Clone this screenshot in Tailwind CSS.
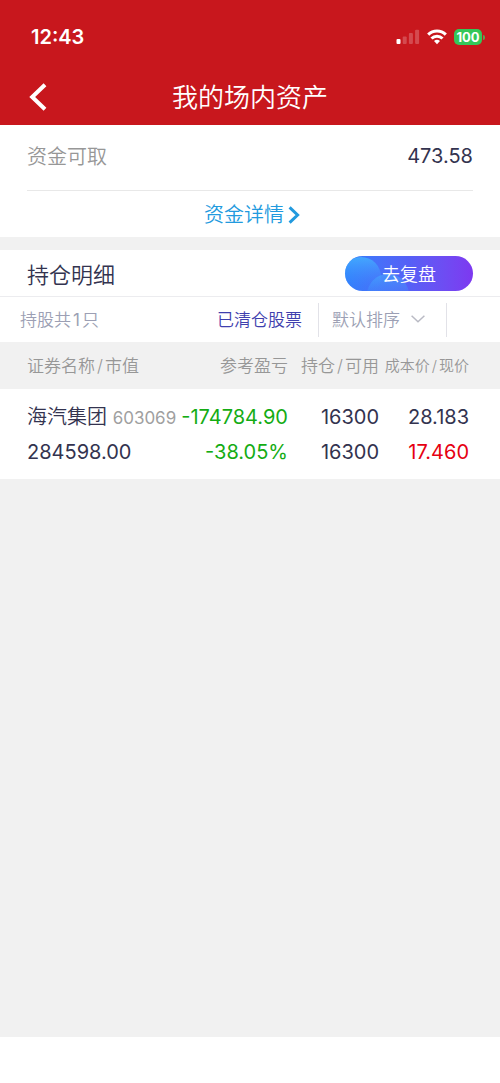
<!doctype html>
<html lang="zh-CN">

<head>
    <meta charset="UTF-8" />
    <meta name="viewport" content="width=device-width, initial-scale=1.0" />
    <title>我的场内资产</title>
    <script src="https://cdn.jsdelivr.net/npm/@tailwindcss/browser@4"></script>
</head>

<body class="flex min-h-screen flex-col bg-white font-['Inter','Noto_Sans_CJK_SC',sans-serif] font-[350] text-[#33334f]">
    <header class="bg-[#c8171d] text-white">
        <!-- status bar -->
        <div class="flex h-[68px] items-center justify-between pt-1.5 pr-[15px] pl-[31px]">
            <span class="text-[20px] leading-6 font-semibold">12:43</span>
            <div class="flex items-center gap-[7px]">
                <svg class="h-4 w-6" viewBox="0 0 24 16" fill="#fff" aria-hidden="true">
                    <rect x="0.5" y="10" width="4" height="5" rx="1" />
                    <g opacity=".22">
                        <rect x="6.7" y="7.5" width="4" height="7.5" rx="1" />
                        <rect x="12.9" y="4" width="4" height="11" rx="1" />
                        <rect x="19.1" y="0.8" width="4" height="14.2" rx="1" />
                    </g>
                </svg>
                <svg class="h-4 w-5" viewBox="0 0 20 16" fill="none" stroke="#fff" stroke-width="3.1" aria-hidden="true">
                    <path d="M1.2 5.6a12.6 12.6 0 0 1 17.6 0" />
                    <path d="M4.5 9.5a7.8 7.8 0 0 1 11 0" />
                    <path d="M10 15.2l-3-3.1a4.4 4.4 0 0 1 6 0z" fill="#fff" stroke="none" />
                </svg>
                <div class="flex items-center gap-px">
                    <span class="flex h-4 w-7 items-center justify-center rounded-[5px] bg-[#34c759] text-[13px] leading-4 font-bold">100</span>
                    <span class="h-[5px] w-0.5 rounded-r-full bg-[#5fa050]"></span>
                </div>
            </div>
        </div>

        <!-- title bar -->
        <div class="grid h-[57px] grid-cols-[1fr_auto_1fr] items-center">
            <button type="button" aria-label="返回" class="ml-[29px] flex size-8 items-center">
                <svg class="h-7 w-[18px]" viewBox="0 0 18 28" fill="none" stroke="#fff" stroke-width="4">
                    <path d="M16 1.8L3.2 14L16 26.2" />
                </svg>
            </button>
            <h1 class="pt-0.5 text-[26px] leading-8">我的场内资产</h1>
        </div>
    </header>

    <main class="flex-1 bg-[#f1f1f1]">
        <!-- available funds -->
        <section class="bg-white px-[27px]">
            <div class="flex h-[66px] items-center justify-between border-b border-[#e8e8e8] pb-1 text-[20px] leading-7">
                <span class="pt-0.5 text-[#979797]">资金可取</span>
                <span class="font-normal">473.58</span>
            </div>
            <a href="#" class="flex h-[46px] items-center justify-center gap-1 pt-0.5 pl-1 text-[20px] leading-7 text-[#229ade]">
                资金详情
                <svg class="h-[18px] w-3" viewBox="0 0 12 18" fill="none" stroke="currentColor" stroke-width="3">
                    <path d="M1.6 1.4L9.6 9L1.6 16.6" />
                </svg>
            </a>
        </section>

        <!-- holdings -->
        <section class="mt-[13px] bg-white">
            <div class="flex h-[47px] items-center justify-between border-b border-[#ececef] px-[27px]">
                <h2 class="pt-1 text-[22px] leading-8">持仓明细</h2>
                <button type="button" class="relative h-[35px] w-32 overflow-hidden rounded-full bg-linear-to-r from-[#2f80fc] via-[#5560f6] to-[#7d38f0] pt-1 text-[18px] leading-6 text-white">
                    <svg class="absolute inset-0 h-full w-full" viewBox="0 0 128 35" aria-hidden="true">
                        <defs>
                            <linearGradient id="bubble" x1="0" y1="0" x2="0" y2="1">
                                <stop offset="0" stop-color="#45b4ff" stop-opacity=".8" />
                                <stop offset="0.8" stop-color="#3a8dff" stop-opacity="0" />
                            </linearGradient>
                        </defs>
                        <circle cx="16" cy="21" r="20" fill="url(#bubble)" />
                        <circle cx="43" cy="39" r="21" fill="url(#bubble)" opacity=".65" />
                    </svg>
                    <span class="relative">去复盘</span>
                </button>
            </div>

            <div class="flex h-[45px] items-center pr-[53px] pl-5 text-[17px] leading-6">
                <span class="text-[#9c9fb4]">持股共<span class="px-0.5 font-normal">1</span>只</span>
                <a href="#" class="mr-4 ml-auto text-[#3f3fae]">已清仓股票</a>
                <div class="relative h-[34px] w-[129px] border-x border-[#e2e2e8]">
                    <select aria-label="排序方式" class="h-full w-full appearance-none bg-transparent pl-[13px] text-[#9c9fb4]">
                        <option>默认排序</option>
                    </select>
                    <svg class="pointer-events-none absolute top-3 right-[21px] h-2 w-3.5" viewBox="0 0 14 8" fill="none" stroke="#b9bac4" stroke-width="1.5">
                        <path d="M0.6 0.8L7 6.8L13.4 0.8" />
                    </svg>
                </div>
            </div>

            <table class="w-full table-fixed text-right text-[20px] leading-[34px] whitespace-nowrap">
                <thead>
                    <tr class="h-[47px] bg-[#f1f1f1] text-[17px] leading-6 text-[#979797]">
                        <th class="pl-[27px] text-left font-[350]">证券名称<span class="px-0.5">/</span>市值</th>
                        <th class="w-[108px] font-[350]">参考盈亏</th>
                        <th class="w-[91px] font-[350]">持仓<span class="px-0.5">/</span>可用</th>
                        <th class="w-[121px] pr-[31px] text-[15px] font-[350]">成本价<span class="px-0.5">/</span>现价</th>
                    </tr>
                </thead>
                <tbody class="font-normal">
                    <tr>
                        <td class="pt-[11px] pl-[27px] text-left"><span class="font-[350]">海汽集团</span> <span class="text-[17px] leading-6 text-[#a0a0a0]">603069</span></td>
                        <td class="pt-[11px] text-[#14ac14]">-174784.90</td>
                        <td class="pt-[11px]">16300</td>
                        <td class="pt-[11px] pr-[31px]">28.183</td>
                    </tr>
                    <tr>
                        <td class="pt-px pb-[10px] pl-[27px] text-left">284598.00</td>
                        <td class="pt-px pb-[10px] text-[#14ac14]">-38.05%</td>
                        <td class="pt-px pb-[10px]">16300</td>
                        <td class="pt-px pr-[31px] pb-[10px] text-[#e60012]">17.460</td>
                    </tr>
                </tbody>
            </table>
        </section>
    </main>

    <footer class="h-[46px] bg-white"></footer>
</body>

</html>
